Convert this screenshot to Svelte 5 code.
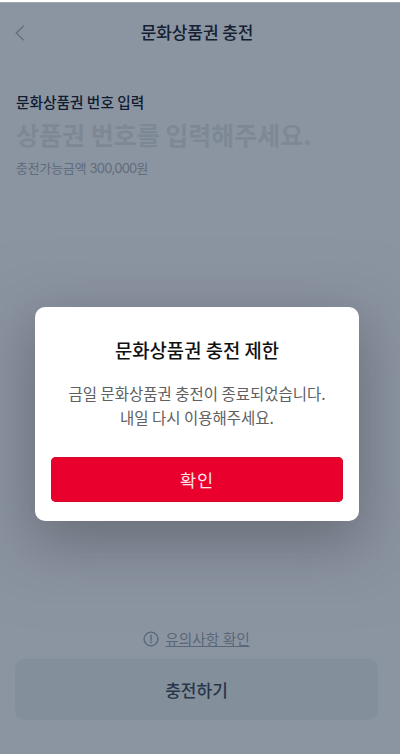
<script>
  let open = $state(true);
</script>

<div class="screen">
  <header>
    <button class="back" aria-label="뒤로">
      <svg width="10" height="16" viewBox="0 0 10 16" fill="none" stroke="#657080" stroke-width="1.5">
        <path d="M8.8.8 1.3 8l7.5 7.2" />
      </svg>
    </button>
    <h1>문화상품권 충전</h1>
  </header>

  <main>
    <div class="label">문화상품권 번호 입력</div>
    <div class="placeholder">상품권 번호를 입력해주세요.</div>
    <div class="hint">충전가능금액 <span>300,000</span>원</div>
  </main>

  <footer>
    <div class="notice">
      <svg width="16" height="16" viewBox="0 0 16 16" fill="none" stroke="#5b6679" stroke-width="1.4">
        <circle cx="8" cy="8" r="6.9" />
        <path d="M8 3.8v6M8 10.6v1.6" />
      </svg>
      <span>유의사항 확인</span>
    </div>
    <button class="charge">충전하기</button>
  </footer>

  {#if open}
    <div class="overlay">
      <div class="dialog" role="dialog" aria-modal="true">
        <h2>문화상품권 충전 제한</h2>
        <p>금일 문화상품권 충전이 종료되었습니다.<br />내일 다시 이용해주세요.</p>
        <button class="confirm" onclick={() => (open = false)}>확인</button>
      </div>
    </div>
  {/if}
</div>

<style>
  .screen {
    position: relative;
    box-sizing: border-box;
    width: 400px;
    height: 754px;
    overflow: hidden;
    display: flex;
    flex-direction: column;
    border-top: 2px solid #fff;
    background: #8b95a1;
    box-shadow: inset 0 1px 0 #a0a7af;
    font-family: 'Noto Sans CJK KR', sans-serif;
  }
  button {
    border: 0;
    padding: 0;
    background: none;
    font-family: inherit;
  }
  header {
    display: grid;
    grid-template-columns: 32px 1fr 32px;
    align-items: center;
    height: 60px;
    flex: none;
  }
  .back {
    display: flex;
    padding: 1px 0 0 15px;
  }
  h1 {
    margin: 0;
    padding-right: 6px;
    text-align: center;
    font-size: 17px;
    line-height: 24px;
    font-weight: 500;
    letter-spacing: -0.1px;
    color: #152034;
  }
  main {
    padding: 29px 16px 0;
    flex: 1;
  }
  .label {
    font-size: 14.7px;
    line-height: 22px;
    font-weight: 500;
    color: #101b30;
  }
  .placeholder {
    margin-top: 3px;
    font-size: 25px;
    line-height: 36px;
    font-weight: 700;
    color: #7e8895;
    white-space: nowrap;
  }
  .hint {
    margin-top: 6px;
    font-size: 12.8px;
    line-height: 20px;
    color: #606b7b;
  }
  .hint span {
    font-family: Inter, sans-serif;
    font-size: 13px;
    letter-spacing: -0.72px;
  }
  footer {
    padding: 0 22px 34px 15px;
  }
  .notice {
    display: flex;
    align-items: center;
    justify-content: center;
    gap: 6px;
    height: 24px;
    margin-bottom: 8px;
    font-size: 14.7px;
    line-height: 24px;
    color: #5b6679;
  }
  .notice span {
    text-decoration: underline;
    text-decoration-thickness: 1px;
    text-underline-offset: 1px;
  }
  .charge {
    display: block;
    width: 100%;
    height: 61px;
    padding-bottom: 1px;
    border-radius: 10px;
    background: #838f9a;
    font-size: 17px;
    font-weight: 500;
    color: #29364a;
  }
  .overlay {
    position: absolute;
    inset: 0;
    display: flex;
    align-items: flex-start;
    padding: 305px 41px 0 35px;
  }
  .dialog {
    box-sizing: border-box;
    width: 324px;
    height: 214px;
    padding: 29px 16px 18px;
    border-radius: 10px;
    background: #fff;
    box-shadow:
      0 18px 55px rgba(72, 86, 88, 0.55),
      0 20px 50px 30px rgba(139, 139, 157, 0.6);
    text-align: center;
  }
  h2 {
    margin: 0;
    font-size: 18.8px;
    line-height: 28px;
    font-weight: 500;
    color: #111;
  }
  p {
    margin: 17px 0 28px;
    font-size: 15.5px;
    line-height: 24px;
    font-weight: 400;
    color: #606060;
    white-space: nowrap;
  }
  .confirm {
    display: block;
    width: 100%;
    height: 45px;
    border-radius: 5px;
    background: #ea002c;
    box-shadow: inset 0 0 0 1px #d5092f;
    font-size: 17.5px;
    letter-spacing: 1px;
    color: #ffe4e8;
  }
</style>
